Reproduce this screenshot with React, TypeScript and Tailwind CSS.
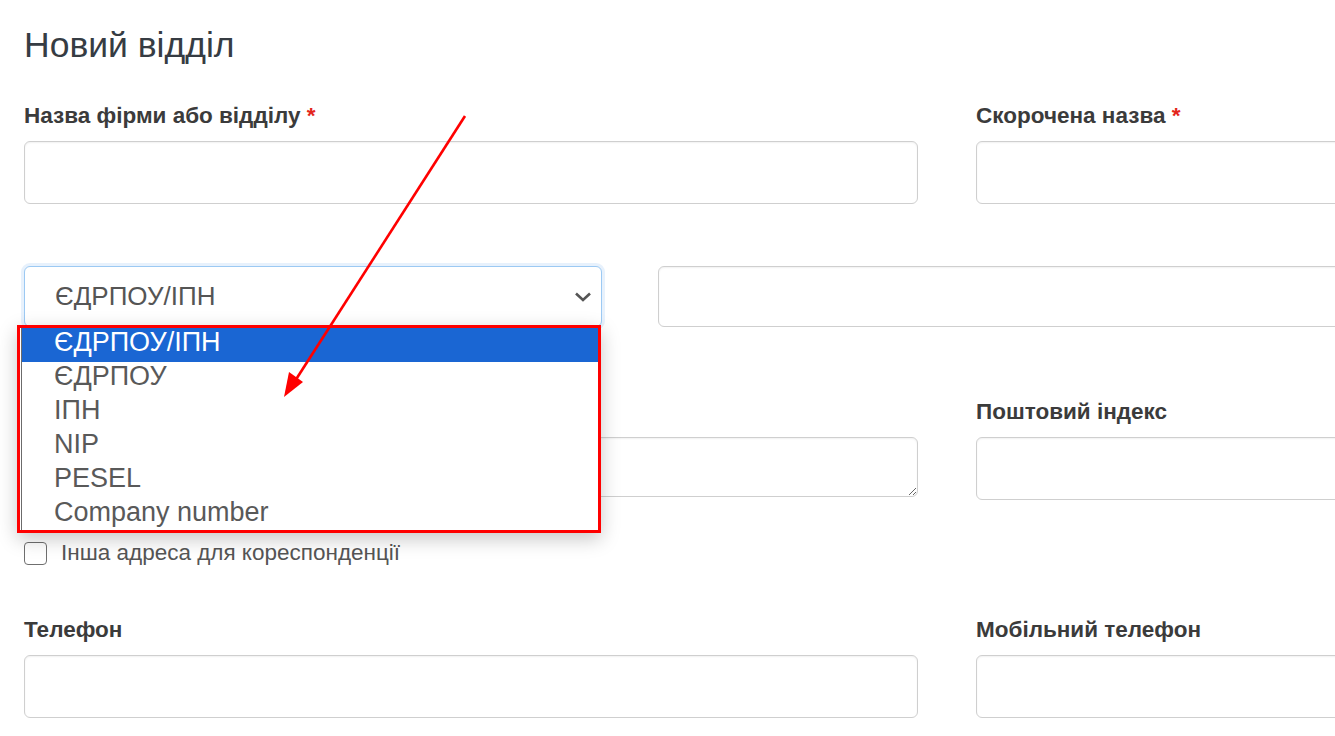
import React from "react";

function Label({ text, required }: { text: string; required?: boolean }) {
  return (
    <div className="h-[24px] text-[22.5px] font-bold leading-[24px] text-[#3b3b3b] whitespace-nowrap">
      {text}
      {required && <span className="text-[#e3261c]"> *</span>}
    </div>
  );
}

function Input({ className = "" }: { className?: string }) {
  return (
    <div
      className={
        "rounded-[6px] border border-[#cfcfcf] bg-white shadow-[inset_0_1px_2px_rgba(0,0,0,0.06)] " +
        className
      }
    />
  );
}

export default function App() {
  const options = ["ЄДРПОУ/ІПН", "ЄДРПОУ", "ІПН", "NIP", "PESEL", "Company number"];
  return (
    <div className="relative w-[1335px] h-[736px] overflow-hidden bg-white font-['Liberation_Sans',Arial,sans-serif]">
      <div className="w-[1900px] pl-6 pt-[23px]">
        <h1 className="text-[35.5px] leading-[44px] text-[#363c43] whitespace-nowrap">Новий відділ</h1>

        {/* Row 1 */}
        <div className="mt-[37px] flex gap-[58px]">
          <div className="w-[894px]">
            <Label text="Назва фірми або відділу" required />
            <Input className="mt-[13px] h-[63px]" />
          </div>
          <div className="w-[894px]">
            <Label text="Скорочена назва" required />
            <Input className="mt-[13px] h-[63px]" />
          </div>
        </div>

        {/* Row 2 */}
        <div className="mt-[62px] flex gap-[56px]">
          <div className="relative w-[578px]">
            <div className="flex h-[61px] items-center justify-between rounded-[6px] border border-[#9cc9f3] bg-white pl-[30px] pr-[9px] shadow-[0_0_0_3px_rgba(120,180,240,0.18)]">
              <span className="text-[26px] text-[#555555]">ЄДРПОУ/ІПН</span>
              <svg width="18" height="12" viewBox="0 0 18 12" className="mt-[1px]">
                <path d="M2 2.5 L9 9 L16 2.5" fill="none" stroke="#555" strokeWidth="2.6" />
              </svg>
            </div>

            {/* Open dropdown */}
            <div className="absolute left-[-7px] top-[59px] z-10 h-[208px] w-[584px] border-[3px] border-[#ff0000] bg-white shadow-[0_6px_18px_rgba(0,0,0,0.22)]">
              <div className="h-full overflow-hidden border-l border-[#6b6b6b] ml-[1px]">
                {options.map((o, i) => (
                  <div
                    key={o}
                    className={
                      "h-[34px] pl-[32px] text-[27px] leading-[28px] whitespace-nowrap " +
                      (i === 0 ? "bg-[#1a66d3] text-white" : "text-[#595959]")
                    }
                  >
                    {o}
                  </div>
                ))}
              </div>
            </div>
          </div>
          <Input className="h-[61px] w-[1200px]" />
        </div>

        {/* Row 3 */}
        <div className="mt-[73px] flex gap-[58px]">
          <div className="w-[894px]">
            <div className="h-[24px]" />
            <textarea className="mt-[13px] block h-[60px] w-full rounded-[6px] border border-[#cfcfcf] bg-white shadow-[inset_0_1px_2px_rgba(0,0,0,0.06)] outline-none" />
          </div>
          <div className="w-[894px]">
            <Label text="Поштовий індекс" />
            <Input className="mt-[13px] h-[63px]" />
          </div>
        </div>

        {/* Checkbox */}
        <div className="mt-[41px] flex items-center gap-[14px]">
          <div className="h-[23px] w-[23px] rounded-[4px] border-[1.5px] border-[#6f6f6f] bg-white" />
          <span className="text-[22.5px] leading-[24px] text-[#555555] whitespace-nowrap">Інша адреса для кореспонденції</span>
        </div>

        {/* Row 4 */}
        <div className="mt-[53px] flex gap-[58px]">
          <div className="w-[894px]">
            <Label text="Телефон" />
            <Input className="mt-[13px] h-[63px]" />
          </div>
          <div className="w-[894px]">
            <Label text="Мобільний телефон" />
            <Input className="mt-[13px] h-[63px]" />
          </div>
        </div>
      </div>

      {/* Annotation arrow */}
      <svg className="pointer-events-none absolute left-0 top-0 z-20" width="1335" height="736">
        <line x1="465" y1="116" x2="295" y2="381" stroke="#ff0000" strokeWidth="2.6" />
        <polygon points="284,397 289,372 303,382" fill="#ff0000" />
      </svg>
    </div>
  );
}
